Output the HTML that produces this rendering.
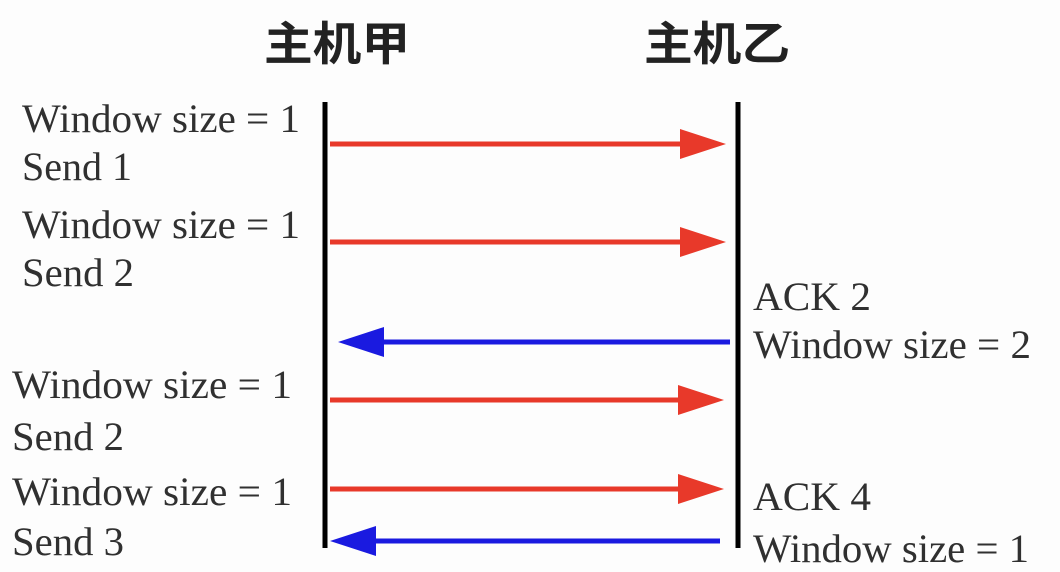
<!DOCTYPE html>
<html><head><meta charset="utf-8"><style>
html,body{margin:0;padding:0;background:#fdfdfd;}
svg{display:block}
.t{font-family:"Liberation Serif","Times New Roman",serif;font-size:40px;fill:#303030}
.h{font-family:"Noto Sans CJK SC",sans-serif;font-size:46px;fill:#222;font-weight:bold}
</style></head><body>
<svg width="1060" height="572" viewBox="0 0 1060 572">
<rect width="1060" height="572" fill="#fdfdfd"/>
<text class="h" x="264" y="60" textLength="146" lengthAdjust="spacingAndGlyphs">主机甲</text>
<text class="h" x="644" y="60" textLength="146" lengthAdjust="spacingAndGlyphs">主机乙</text>
<line x1="325" y1="102" x2="325" y2="548" stroke="#000" stroke-width="5"/>
<line x1="738" y1="102" x2="738" y2="548" stroke="#000" stroke-width="5"/>
<g stroke="#e8392a" stroke-width="5" fill="#e8392a">
<line x1="330" y1="144" x2="690" y2="144"/><polygon points="680,129 726,144 680,159" stroke="none"/>
<line x1="330" y1="242" x2="690" y2="242"/><polygon points="680,227 726,242 680,257" stroke="none"/>
<line x1="330" y1="400" x2="690" y2="400"/><polygon points="678,385 724,400 678,415" stroke="none"/>
<line x1="330" y1="489" x2="690" y2="489"/><polygon points="678,474 724,489 678,504" stroke="none"/>
</g>
<g stroke="#1a1ae0" stroke-width="5" fill="#1a1ae0">
<line x1="370" y1="342" x2="730" y2="342"/><polygon points="384,327 338,342 384,357" stroke="none"/>
<line x1="370" y1="541" x2="720" y2="541"/><polygon points="376,526 330,541 376,556" stroke="none"/>
</g>
<g class="t">
<text class="t" x="22" y="132" textLength="278" lengthAdjust="spacingAndGlyphs">Window size = 1</text>
<text class="t" x="22" y="180" textLength="110" lengthAdjust="spacingAndGlyphs">Send 1</text>
<text class="t" x="22" y="238" textLength="278" lengthAdjust="spacingAndGlyphs">Window size = 1</text>
<text class="t" x="22" y="286" textLength="112" lengthAdjust="spacingAndGlyphs">Send 2</text>
<text class="t" x="12" y="398" textLength="280" lengthAdjust="spacingAndGlyphs">Window size = 1</text>
<text class="t" x="12" y="450" textLength="112" lengthAdjust="spacingAndGlyphs">Send 2</text>
<text class="t" x="12" y="505" textLength="280" lengthAdjust="spacingAndGlyphs">Window size = 1</text>
<text class="t" x="12" y="555" textLength="112" lengthAdjust="spacingAndGlyphs">Send 3</text>
<text class="t" x="753" y="310" textLength="118" lengthAdjust="spacingAndGlyphs">ACK 2</text>
<text class="t" x="753" y="358" textLength="278" lengthAdjust="spacingAndGlyphs">Window size = 2</text>
<text class="t" x="753" y="510" textLength="118" lengthAdjust="spacingAndGlyphs">ACK 4</text>
<text class="t" x="753" y="562" textLength="276" lengthAdjust="spacingAndGlyphs">Window size = 1</text>
</g>
</svg>
</body></html>
